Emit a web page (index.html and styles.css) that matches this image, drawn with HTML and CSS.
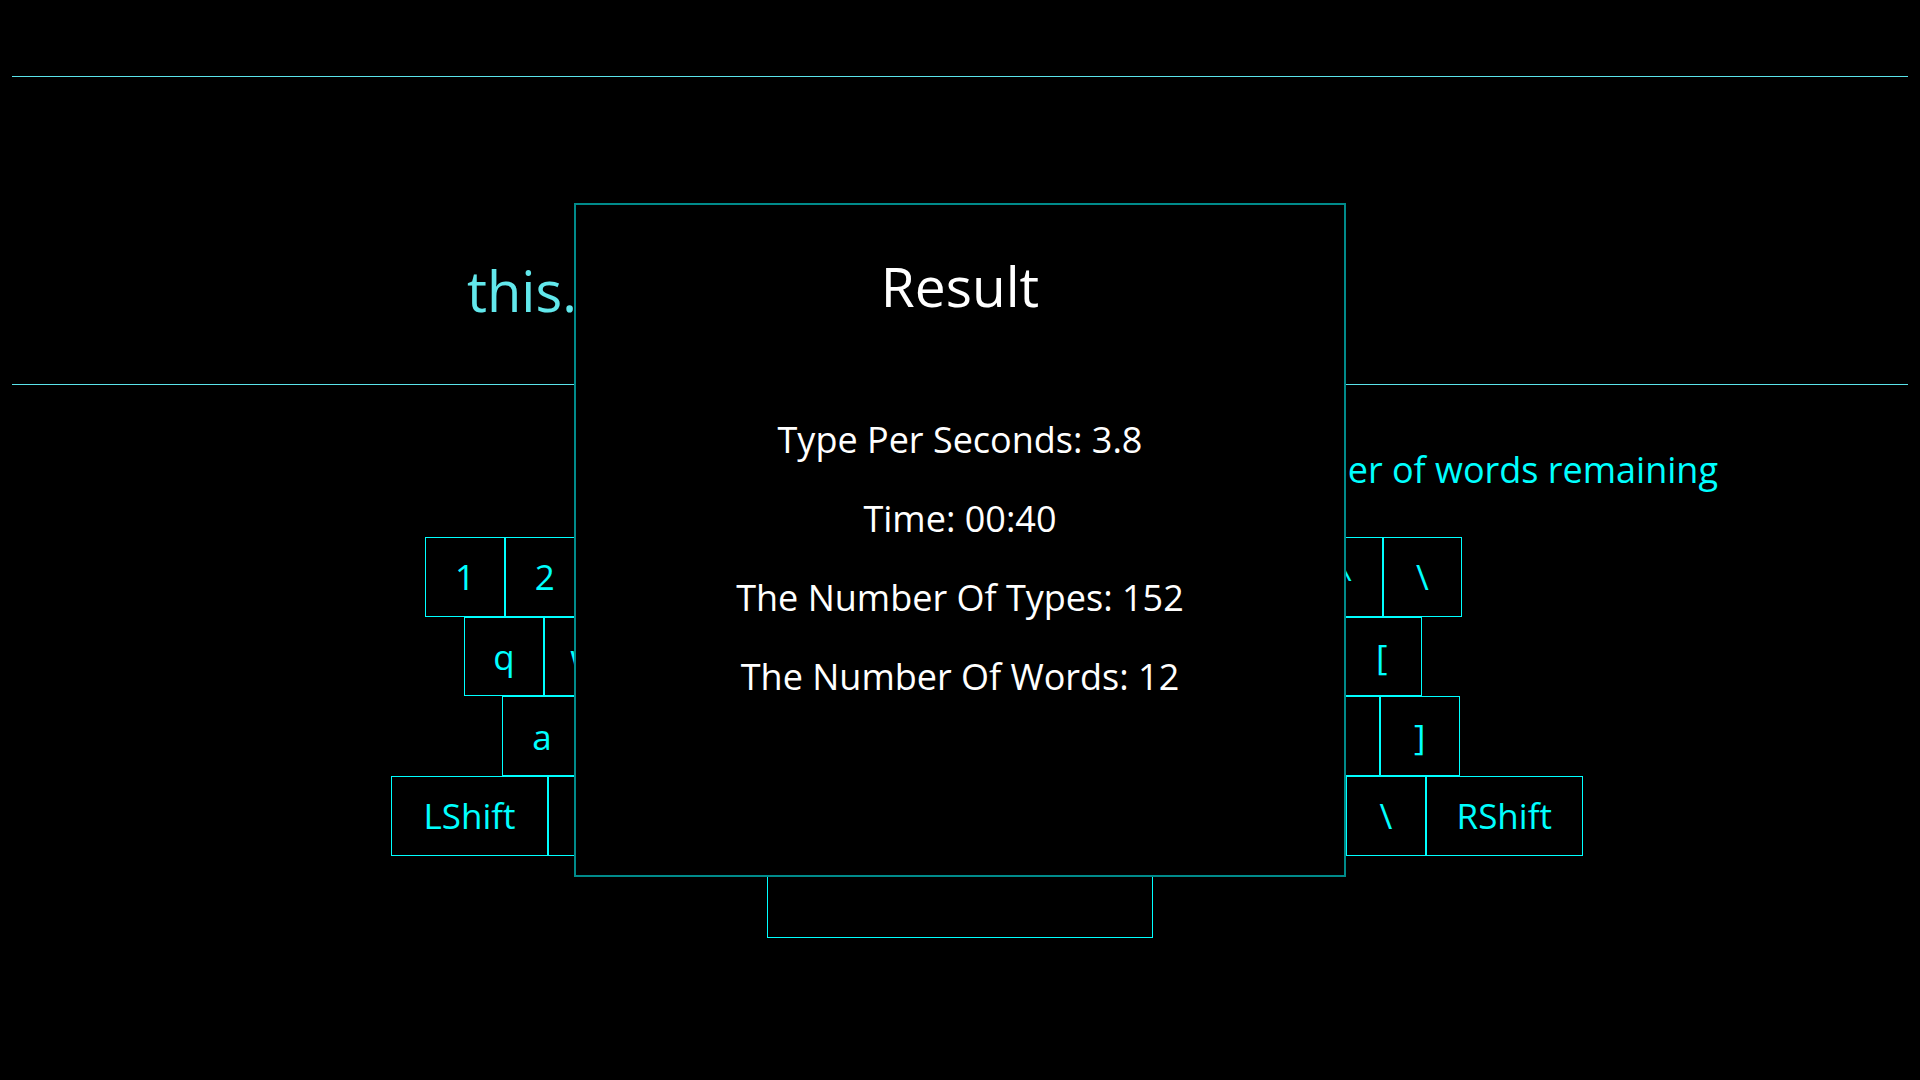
FILE: index.html
```html
<!DOCTYPE html>
<html lang="en">
<head>
<meta charset="utf-8">
<title>Typing Practice</title>
<link rel="stylesheet" href="styles.css">
</head>
<body>
<div class="page">
  <div class="rule"></div>
  <div class="prompt">
    <div class="sentence">this.setState();</div>
  </div>
  <div class="rule"></div>
  <div class="remaining-row">
    <div class="remaining">Number of words remaining</div>
  </div>
  <div class="keyboard">
    <div class="kb-row row1">
      <div class="key">1</div><div class="key">2</div><div class="key">3</div><div class="key">4</div><div class="key">5</div><div class="key">6</div><div class="key">7</div><div class="key">8</div><div class="key">9</div><div class="key">0</div><div class="key">-</div><div class="key">^</div><div class="key">\</div>
    </div>
    <div class="kb-row row2">
      <div class="key">q</div><div class="key">w</div><div class="key">e</div><div class="key">r</div><div class="key">t</div><div class="key">y</div><div class="key">u</div><div class="key">i</div><div class="key">o</div><div class="key">p</div><div class="key">@</div><div class="key">[</div>
    </div>
    <div class="kb-row row3">
      <div class="key">a</div><div class="key">s</div><div class="key">d</div><div class="key">f</div><div class="key">g</div><div class="key">h</div><div class="key">j</div><div class="key">k</div><div class="key">l</div><div class="key">;</div><div class="key">:</div><div class="key">]</div>
    </div>
    <div class="kb-row row4">
      <div class="key wide">LShift</div><div class="key">z</div><div class="key">x</div><div class="key">c</div><div class="key">v</div><div class="key">b</div><div class="key">n</div><div class="key">m</div><div class="key">,</div><div class="key">.</div><div class="key">/</div><div class="key">\</div><div class="key wide">RShift</div>
    </div>
  </div>
  <div class="input-row">
    <div class="input-box"></div>
  </div>
</div>

<div class="modal">
  <h1 class="modal-title">Result</h1>
  <div class="stats">
    <p class="stat">Type Per Seconds: 3.8</p>
    <p class="stat">Time: 00:40</p>
    <p class="stat">The Number Of Types: 152</p>
    <p class="stat">The Number Of Words: 12</p>
  </div>
</div>
</body>
</html>
```
FILE: styles.css
```css
html, body {
  margin: 0;
  padding: 0;
  background: #000;
  width: 1920px;
  height: 1080px;
  overflow: hidden;
  font-family: "Open Sans", "Noto Sans", sans-serif;
}

.page {
  display: flex;
  flex-direction: column;
  padding-top: 76px;
}

.rule {
  height: 1px;
  margin: 0 12px;
  background: #5ae3ea;
}

.prompt {
  height: 307px;
  display: flex;
  align-items: flex-start;
}

.sentence {
  margin-left: 467px;
  margin-top: 181px;
  font-size: 56px;
  line-height: 64px;
  color: #62e8ec;
  white-space: nowrap;
}

.remaining-row {
  display: flex;
  justify-content: flex-end;
  padding-right: 202px;
  height: 152px;
}

.remaining {
  margin-top: 61px;
  font-size: 36px;
  line-height: 48px;
  color: #00ffff;
  white-space: nowrap;
}

.keyboard {
  display: flex;
  flex-direction: column;
  padding-left: 391px;
}

.kb-row {
  display: flex;
}

.row1 { margin-left: 34px; }
.row2 { margin-left: 73px; }
.row3 { margin-left: 111px; }
.row4 { margin-left: 0; }

.key {
  box-sizing: border-box;
  width: 79.8px;
  height: 79.7px;
  border: 1px solid #00ffff;
  color: #00ffff;
  font-size: 35px;
  display: flex;
  align-items: center;
  justify-content: center;
}

.key.wide {
  width: 157px;
}

.input-row {
  display: flex;
  justify-content: center;
  padding-top: 8px;
}

.input-box {
  box-sizing: border-box;
  margin-left: -1px;
  width: 386px;
  height: 74px;
  border: 1px solid #00ffff;
}

.modal {
  position: absolute;
  left: 574px;
  top: 203px;
  width: 772px;
  height: 674px;
  box-sizing: border-box;
  border: 2px solid #008b8b;
  background: #000;
  color: #fff;
  display: flex;
  flex-direction: column;
  align-items: center;
}

.modal-title {
  margin: 41px 0 0;
  font-size: 55px;
  font-weight: 400;
  line-height: 80px;
}

.stats {
  margin-top: 74px;
  display: flex;
  flex-direction: column;
  align-items: center;
}

.stat {
  margin: 0;
  font-size: 36px;
  line-height: 79px;
  white-space: nowrap;
}
```
